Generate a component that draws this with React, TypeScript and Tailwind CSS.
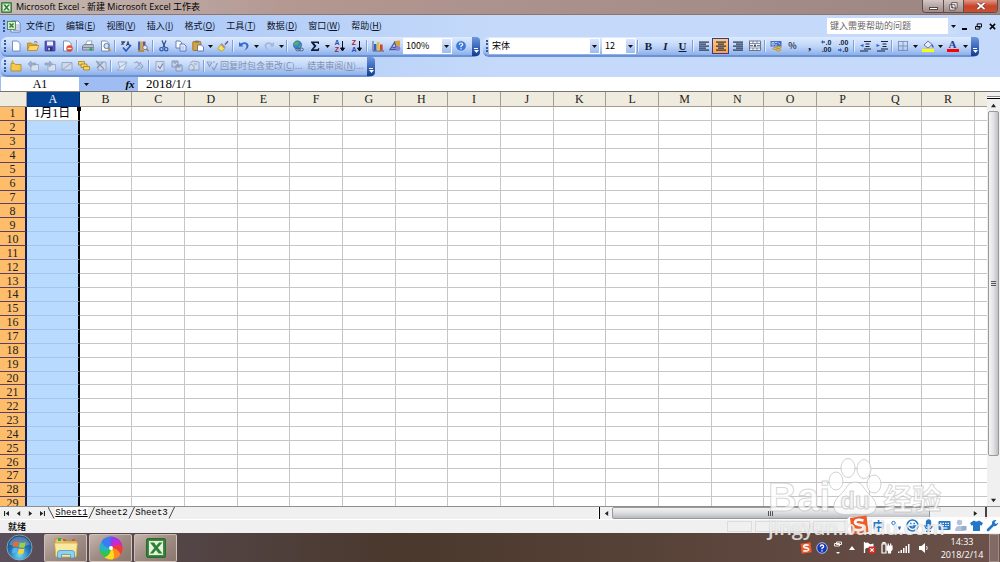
import type { ReactNode } from "react";
import clsx from "clsx";

const columns = "ABCDEFGHIJKLMNOPQR".split("");
const rows = Array.from({ length: 29 }, (_, i) => i + 1);

const menus = [
  ["文件", "F"],
  ["编辑", "E"],
  ["视图", "V"],
  ["插入", "I"],
  ["格式", "O"],
  ["工具", "T"],
  ["数据", "D"],
  ["窗口", "W"],
  ["帮助", "H"],
];

const doc = (
  <path d="M2.5 1h5l2.5 2.500v7.500h-7.500z" fill="#fff" stroke="#5d78ad" strokeWidth="0.8" />
);

const lines = (widths: number[], anchor: "l" | "c" | "r") =>
  widths.map((w, i) => (
    <rect
      key={i}
      x={anchor === "l" ? 1 : anchor === "r" ? 11 - w : 6 - w / 2}
      y={1.5 + i * 2}
      width={w}
      height="1.2"
      fill="#20304f"
    />
  ));

const icons: Record<string, ReactNode> = {
  new: doc,
  open: (
    <>
      <path d="M0.500 3h4l1 1.200h4.500V10H0.500z" fill="#e8a922" stroke="#a8740f" strokeWidth="0.6" />
      <path d="M2.500 5.500H12L9.800 10.500H0.500z" fill="#ffd766" stroke="#a8740f" strokeWidth="0.6" />
      <path d="M7 2.200q2-1.600 3.500 0.500" fill="none" stroke="#7a5a22" strokeWidth="0.9" />
    </>
  ),
  save: (
    <>
      <rect x="1" y="1" width="10" height="10" rx="0.500" fill="#5858c0" stroke="#33338a" strokeWidth="0.7" />
      <rect x="3" y="1.500" width="6" height="4" fill="#eef1fb" />
      <rect x="3.500" y="7" width="5" height="4" fill="#2c2c70" />
      <rect x="4.300" y="7.800" width="1.500" height="2.500" fill="#dfe3f7" />
    </>
  ),
  permission: (
    <>
      {doc}
      <circle cx="8.500" cy="8.500" r="3.200" fill="#e2492a" />
      <rect x="6.500" y="7.800" width="4" height="1.400" fill="#fff" />
    </>
  ),
  print: (
    <>
      <path d="M3.500 5l1.500-4h5L8.800 5z" fill="#fff" stroke="#70829f" strokeWidth="0.6" />
      <path d="M0.500 6l2-1.500h8.500L12 6v4H0.500z" fill="#b7bdca" stroke="#566179" strokeWidth="0.7" />
      <path d="M1 7.500h10.500" stroke="#6d7588" strokeWidth="0.8" />
      <circle cx="9" cy="9.200" r="1.600" fill="#3aa84c" />
    </>
  ),
  preview: (
    <>
      {doc}
      <circle cx="7.500" cy="6" r="2.600" fill="#cfe4fb" stroke="#5c6c88" strokeWidth="0.9" />
      <path d="M9 8l2.500 3" stroke="#c8852b" strokeWidth="1.500" />
    </>
  ),
  spelling: (
    <>
      <path d="M1 2h4M3 1v4M1 4.500q2-0.500 4-3M6.500 6L8 1.500 9.500 6M7 4.500h2" fill="none" stroke="#222e4d" strokeWidth="0.9" />
      <path d="M3 7.500l3 3.500 5-6" fill="none" stroke="#2857b8" strokeWidth="1.600" />
    </>
  ),
  research: (
    <>
      <path d="M1 1.500h2.500V10H1z" fill="#4b65b8" />
      <path d="M3.500 1.500H6V10H3.500z" fill="#dfa735" />
      <path d="M6 1.500h2.500V7H6z" fill="#6d4fa0" />
      <circle cx="8" cy="7.500" r="2.200" fill="#dceafc" stroke="#5f6b85" strokeWidth="0.8" />
      <path d="M9.500 9l2 2.300M1 11h6" stroke="#b87924" strokeWidth="1.300" />
    </>
  ),
  cut: (
    <>
      <path d="M4 0.500l3 7M8 0.500l-3 7" stroke="#2c4d90" strokeWidth="1.200" />
      <circle cx="3.500" cy="9.200" r="1.700" fill="none" stroke="#2c55ad" strokeWidth="1.200" />
      <circle cx="8.200" cy="9.200" r="1.700" fill="none" stroke="#2c55ad" strokeWidth="1.200" />
    </>
  ),
  copy: (
    <>
      <path d="M1 1h4l1.500 1.500V8H1z" fill="#fff" stroke="#4667ae" strokeWidth="0.8" />
      <path d="M5 4h4l2 2v5H5z" fill="#e9f0fd" stroke="#4667ae" strokeWidth="0.8" />
      <path d="M6.300 7h3M6.300 9h3" stroke="#7d97cf" strokeWidth="0.7" />
    </>
  ),
  paste: (
    <>
      <rect x="0.800" y="1.500" width="8" height="9" rx="0.800" fill="#dda136" stroke="#8a5d13" strokeWidth="0.7" />
      <rect x="3" y="0.600" width="3.800" height="2.200" fill="#7c7c86" />
      <path d="M5.500 5h4l2 2v4h-6z" fill="#fff" stroke="#4667ae" strokeWidth="0.800" />
    </>
  ),
  brush: (
    <>
      <path d="M7.500 4l3-3.300 1 1L8.500 5z" fill="#6b4c85" />
      <path d="M4.500 3l4.500 4-1.500 1.500-4-4z" fill="#9d9aa8" />
      <path d="M3.500 4.500l4 4L5 11.200 0.800 9z" fill="#f7df58" stroke="#a98b1f" strokeWidth="0.600" />
    </>
  ),
  undo: (
    <path d="M1 2v4.500h4.500L4 5q4-2.500 4.500 1 0 2-2 4.500Q11 8 10.500 5 9 0.500 2.700 3.500z" fill="#3167cf" />
  ),
  redo: (
    <path d="M11 2v4.500H6.500L8 5Q4 2.500 3.500 6q0 2 2 4.500Q1 8 1.500 5 3 0.500 9.300 3.500z" fill="#a3b8da" />
  ),
  link: (
    <>
      <circle cx="5.500" cy="5" r="4.200" fill="#3a7fd0" stroke="#275b9c" strokeWidth="0.5" />
      <path d="M3 2q3-1 4 0.500L5.500 5 3 5.500 1.800 4zM6 6l3-1-1 3z" fill="#50b558" />
      <ellipse cx="6" cy="9.500" rx="2.300" ry="1.400" fill="none" stroke="#4d5f80" strokeWidth="0.9" />
      <ellipse cx="9.300" cy="9.500" rx="2.300" ry="1.400" fill="none" stroke="#4d5f80" strokeWidth="0.9" />
    </>
  ),
  sum: <path d="M2 1.500h8v2.500H9L8.500 3H5l2.500 3L4.500 9.200h4.200L9.500 8h0.800l-0.500 3H2v-1l3-3.800L2 2.500z" fill="#111d38" />,
  chart: (
    <>
      <path d="M1 1v10h11" fill="none" stroke="#404f70" strokeWidth="0.9" />
      <path d="M2 4h2.400v6.500H2z" fill="#2f5fc4" />
      <path d="M5 2h2.400v8.500H5z" fill="#f1b92c" />
      <path d="M8 4.500h2.600v6H8z" fill="#d04426" />
    </>
  ),
  drawing: (
    <>
      <path d="M5 1l6-0.500V6L8 7.500z" fill="#d8a33a" />
      <path d="M1 9.500L5.500 2.500 8 9.500zM3.300 7.500h3.500" fill="none" stroke="#4a5aa8" strokeWidth="1.300" />
      <circle cx="9" cy="8.500" r="2.400" fill="#8a82cd" />
    </>
  ),
  help: (
    <>
      <circle cx="6" cy="6" r="5.300" fill="#3b78d8" stroke="#c8dcfa" strokeWidth="0.8" />
      <path d="M4.300 4.700Q4.500 3 6 3t1.700 1.500Q7.700 5.500 6 6.200v1" fill="none" stroke="#fff" strokeWidth="1.200" />
      <rect x="5.400" y="8.200" width="1.200" height="1.200" fill="#fff" />
    </>
  ),
  left: lines([10, 7, 10, 7, 10], "l"),
  center: lines([10, 6, 10, 6, 10], "c"),
  right: lines([10, 7, 10, 7, 10], "r"),
  merge: (
    <>
      <rect x="0.500" y="1" width="11" height="9.500" fill="#f4f8ff" stroke="#3f4c69" strokeWidth="0.7" />
      <path d="M0.500 3.500h11M0.500 8h11M4 1v2.500M8 1v2.500M4 8v2.500M8 8v2.500" stroke="#3f4c69" strokeWidth="0.6" />
      <path d="M1 5.800h3M8 5.800h3M5 7l1-2.500L7 7" fill="none" stroke="#1c2c50" strokeWidth="0.9" />
    </>
  ),
  currency: (
    <>
      <rect x="0.500" y="1" width="11" height="5.500" fill="#3f6cc0" />
      <path d="M2 2.500h2v2.500H2zM5 2.500h2.300M5 5h2.300M8.500 2.500l1.500 2" fill="none" stroke="#dbe8fd" strokeWidth="0.800" />
      <ellipse cx="5" cy="8.500" rx="2.300" ry="1" fill="#efc04a" stroke="#9c7014" strokeWidth="0.5" />
      <ellipse cx="8.500" cy="9.800" rx="2.300" ry="1.200" fill="#efc04a" stroke="#9c7014" strokeWidth="0.5" />
      <ellipse cx="9" cy="7.300" rx="2.300" ry="1" fill="#efc04a" stroke="#9c7014" strokeWidth="0.5" />
    </>
  ),
  outdent: (
    <>
      <path d="M5 1.500h7M6.500 4h4M6.500 6.500h4M5 9h7M1 11h8" stroke="#16233f" strokeWidth="1.200" />
      <path d="M4.500 4L1 5.500 4.500 7z" fill="#2d60c4" />
    </>
  ),
  indent: (
    <>
      <path d="M5 1.500h7M6.500 4h4M6.500 6.500h4M5 9h7M1 11h8" stroke="#16233f" strokeWidth="1.200" />
      <path d="M0.500 4L4 5.500 0.500 7z" fill="#2d60c4" />
    </>
  ),
  borders: <path d="M1 1.500h10M1 6h10M1 10.500h10M1.500 1v10M6 1v10M10.500 1v10" stroke="#7486ab" strokeWidth="0.8" />,
  fill: (
    <>
      <path d="M2 5l4-4 4 3.500-4 3.500z" fill="#e7edf8" stroke="#50607f" strokeWidth="0.8" />
      <path d="M9.500 4q2.500 0.500 2 4-1.500-0.500-2-2.500z" fill="#3869c6" />
      <rect x="0" y="9" width="12" height="3" fill="#ffff00" />
    </>
  ),
  folder: (
    <>
      <path d="M1 3.500h3.500l1 1H11V11H1z" fill="#f5c84a" stroke="#a87f19" strokeWidth="0.7" />
      <path d="M2.500 0.500v3M1 2h3" stroke="#e1a719" strokeWidth="0.9" />
    </>
  ),
  prev: (
    <>
      <path d="M4 4.500h7.500V11H4z" fill="#d6dfee" stroke="#93a2c0" strokeWidth="0.8" />
      <path d="M1 4l3-3v2h4.500v2H4v2z" fill="#9fafcb" stroke="#8393b4" strokeWidth="0.6" />
    </>
  ),
  next: (
    <>
      <path d="M4 4.500h7.500V11H4z" fill="#d6dfee" stroke="#93a2c0" strokeWidth="0.8" />
      <path d="M8.500 4l-3-3v2H1v2h4.500v2z" fill="#9fafcb" stroke="#8393b4" strokeWidth="0.6" />
    </>
  ),
  note: <path d="M1 2.500h10v7.500H1zM1.500 9.500L10.500 3" fill="#cfd9ea" stroke="#8d9cbb" strokeWidth="0.8" />,
  notes: (
    <>
      <path d="M0.500 1.500h6V5h-6z" fill="#f8d25a" stroke="#9c781c" strokeWidth="0.7" />
      <path d="M3 4h6v3.500H3z" fill="#f8d25a" stroke="#9c781c" strokeWidth="0.7" />
      <path d="M5.500 6.500h6V10h-6z" fill="#f8d25a" stroke="#9c781c" strokeWidth="0.7" />
    </>
  ),
  del: (
    <>
      <path d="M3 2h8v8H3z" fill="#cfd9ea" stroke="#8d9cbb" strokeWidth="0.8" />
      <path d="M1 1l8 8M8 2L2 8" stroke="#8696b6" strokeWidth="1.100" />
    </>
  ),
  ink: <path d="M2 2h9L8 10H1q4-1 2-5zM3 8l7-5" fill="#dde6f5" stroke="#95a5c4" strokeWidth="0.8" />,
  inkoff: <path d="M1 3q3-2 5 0 4 1 4 4-2 3-6 2M3 1l6 7M8 2L2 9" fill="none" stroke="#95a5c4" strokeWidth="1" />,
  task: (
    <>
      <path d="M2 1.500h8v9.500H2z" fill="#d5deee" stroke="#8d9cbb" strokeWidth="0.8" />
      <path d="M4 6l2 2.500 3-5" fill="none" stroke="#7586a8" strokeWidth="1.200" />
    </>
  ),
  files: <path d="M1 1h6v6H1zM3 1v2h2V1M5 5h6v6H5zM7 5v2h2V5" fill="#c8d3e7" stroke="#7f90b2" strokeWidth="0.9" />,
  mail: <path d="M2 3l3-2 6 1v8H4M1 10V6l2-2 3 2v4zM6 4h3" fill="#cfd9ea" stroke="#8d9cbb" strokeWidth="0.8" />,
  reply: <path d="M1 1.500l2.500 5L6 2M2.500 2h2M6 7l2 3 3.500-7M7 2h2" fill="none" stroke="#8d9cbb" strokeWidth="1.200" />,
};

function Icon({ name }: { name: string }) {
  return (
    <svg viewBox="0 0 12 12" className="size-3" aria-hidden>
      {icons[name]}
    </svg>
  );
}

function Tool({ label, icon, active, children }: { label: string; icon?: string; active?: boolean; children?: ReactNode }) {
  return (
    <button
      type="button"
      aria-label={label}
      className={clsx(
        "flex h-4 w-[17px] shrink-0 items-center justify-center text-[#111d38]",
        active && "border border-[#3a3a8c] bg-linear-to-b from-[#ffc97c] to-[#ff9f45]",
      )}
    >
      {icon ? <Icon name={icon} /> : children}
    </button>
  );
}

function Caret() {
  return (
    <svg viewBox="0 0 5 3" className="h-[3px] w-[5px]" aria-hidden>
      <path d="M0 0h5L2.500 3z" fill="#111" />
    </svg>
  );
}

function More({ label }: { label: string }) {
  return (
    <button type="button" aria-label={`${label}选项`} className="flex h-4 w-2 shrink-0 items-center justify-center">
      <Caret />
    </button>
  );
}

function Sep() {
  return <span className="mx-px h-3 w-0.5 shrink-0 border-l border-[#7d9fdb] bg-white/60" />;
}

function Grip() {
  return <span className="mr-px ml-[3px] h-3 w-px shrink-0 border-l-2 border-dotted border-[#35599f]" />;
}

function Bar({ label, children }: { label: string; children: ReactNode }) {
  return (
    <div
      role="toolbar"
      aria-label={label}
      className="flex h-5 shrink-0 items-center rounded-md border-b-2 border-[#6b91d3] bg-linear-to-b from-[#deebff] via-[#c0d6f8] to-[#8db0ea]"
    >
      {children}
      <button
        type="button"
        aria-label={`${label}选项`}
        className="ml-auto flex h-[19px] w-2 shrink-0 flex-col items-center justify-end gap-px rounded-r-sm bg-linear-to-b from-[#6c97e0] to-[#123c92] pb-[3px]"
      >
        <span className="h-px w-1 bg-white" />
        <svg viewBox="0 0 5 3" className="h-[3px] w-[5px]" aria-hidden>
          <path d="M0 0h5L2.500 3z" fill="#fff" />
        </svg>
      </button>
    </div>
  );
}

function Combo({ label, value, className }: { label: string; value: string; className: string }) {
  return (
    <div className={clsx("flex h-4 shrink-0 bg-white p-px", className)}>
      <select
        aria-label={label}
        className="min-w-0 flex-1 appearance-none px-0.5 text-[9px] leading-[14px] text-black outline-none"
      >
        <option>{value}</option>
      </select>
      <span className="flex w-[9px] items-center justify-center bg-linear-to-b from-[#dbe8fd] to-[#9dbbee]">
        <Caret />
      </span>
    </div>
  );
}

function SortIcon({ top, bottom }: { top: string; bottom: string }) {
  return (
    <span className="flex items-center">
      <span className="flex flex-col font-['Liberation_Sans',sans-serif] text-[7px] leading-[7px] font-bold">
        <span className={top === "A" ? "text-[#2850ad]" : "text-[#a5222b]"}>{top}</span>
        <span className={bottom === "A" ? "text-[#2850ad]" : "text-[#a5222b]"}>{bottom}</span>
      </span>
      <svg viewBox="0 0 5 12" className="h-3 w-[5px]" aria-hidden>
        <path d="M2.500 1v9M0.500 8l2 3 2-3z" fill="#111" stroke="#111" />
      </svg>
    </span>
  );
}

function DecimalIcon({ top, bottom, less }: { top: string; bottom: string; less?: boolean }) {
  return (
    <span className="relative flex flex-col items-end font-['Liberation_Sans',sans-serif] text-[7px] leading-[7px] font-bold">
      <span>{top}</span>
      <span>{bottom}</span>
      <svg viewBox="0 0 4 4" className={clsx("absolute -left-px size-1", less ? "bottom-px rotate-180" : "top-px")} aria-hidden>
        <path d="M0 2l2-2v1.300h2v1.400H2V4z" fill="#2d60c4" />
      </svg>
    </span>
  );
}

function ExcelLogo({ className }: { className: string }) {
  return (
    <svg viewBox="0 0 20 20" className={className} aria-hidden>
      <rect x="0.700" y="0.700" width="18.600" height="18.600" rx="1.500" fill="#3f8b40" stroke="#2b6b2f" strokeWidth="1.400" />
      <rect x="3" y="3" width="14" height="14" fill="#e6f2df" />
      <path d="M4 4.500h4l2.300 3.300L13 4.500h3.500l-4.600 5.300 4.600 5.700h-4l-2.500-3.600-2.800 3.600H3.800l4.500-5.600z" fill="#2f8034" />
    </svg>
  );
}

function TitleBar() {
  return (
    <header className="flex h-[15px] shrink-0 items-center border-b border-[#8c7672] bg-linear-to-r from-[#c6bab4] via-[#b39791] via-30% to-[#9b8682] pl-px">
      <ExcelLogo className="size-[11px]" />
      <h1 className="ml-1 font-['Open_Sans','Noto_Sans_CJK_SC',sans-serif] text-[9px] leading-[14px] text-black">
        Microsoft Excel - 新建 Microsoft Excel 工作表
      </h1>
      <div className="mr-0.5 ml-auto flex h-[13px] self-start overflow-hidden rounded-b border border-t-0 border-[#5e4d4b]">
        <button type="button" aria-label="最小化" className="flex w-[21px] items-center justify-center border-r border-[#5e4d4b] bg-linear-to-b from-[#d3c6c4] to-[#a08b88]">
          <span className="mt-1 h-[3px] w-[9px] border border-[#57494a] bg-white" />
        </button>
        <button type="button" aria-label="还原" className="flex w-[20px] items-center justify-center border-r border-[#5e4d4b] bg-linear-to-b from-[#d3c6c4] to-[#a08b88]">
          <svg viewBox="0 0 10 10" className="size-[9px]" aria-hidden>
            <path d="M3 0.700h6v6H3zM0.800 3h6v6h-6z" fill="#fff" stroke="#57494a" strokeWidth="1" />
            <path d="M3 5h1.800v1.800H3z" fill="#57494a" />
          </svg>
        </button>
        <button type="button" aria-label="关闭" className="flex w-[33px] items-center justify-center bg-linear-to-b from-[#dd9a89] via-[#cb432a] to-[#c55135]">
          <svg viewBox="0 0 10 8" className="h-2 w-[10px]" aria-hidden>
            <path d="M1.500 1l7 6M8.500 1l-7 6" stroke="#6a3028" strokeWidth="3" />
            <path d="M1.500 1l7 6M8.500 1l-7 6" stroke="#fff" strokeWidth="1.700" />
          </svg>
        </button>
      </div>
    </header>
  );
}

function MenuBar() {
  return (
    <nav className="flex h-[22px] shrink-0 items-center pr-1 text-[9px]">
      <Grip />
      <svg viewBox="0 0 14 13" className="ml-px h-[13px] w-[14px]" aria-hidden>
        <path d="M4 1h7l2 2v9H4z" fill="#fff" stroke="#5370a8" strokeWidth="0.8" />
        <path d="M9 5h3M9 7h3M9 9h3M6 10.500h6" stroke="#7d97cf" strokeWidth="0.8" />
        <rect x="0.500" y="1.500" width="8" height="8" fill="#d9edd2" stroke="#3a7b3c" strokeWidth="0.8" />
        <path d="M2.500 3.500l4 4M6.500 3.500l-4 4" stroke="#2f8034" strokeWidth="1.500" />
      </svg>
      <div className="ml-[5px] flex gap-[11px]">
        {menus.map(([name, key]) => (
          <button key={key} type="button" className="whitespace-nowrap text-[#0a1226]">
            {name}(<u>{key}</u>)
          </button>
        ))}
      </div>
      <div className="ml-auto flex h-4 w-[131px] bg-white">
        <input
          aria-label="键入需要帮助的问题"
          placeholder="键入需要帮助的问题"
          className="min-w-0 flex-1 pl-[3px] text-[9px] outline-none placeholder:text-[#666]"
        />
        <button type="button" aria-label="显示问题列表" className="flex w-[10px] items-center justify-center bg-[#c9dcfa]">
          <Caret />
        </button>
      </div>
      <div className="ml-1 flex w-[34px] items-center justify-between">
        <button type="button" aria-label="最小化工作簿" className="flex h-2 w-[5px] items-end">
          <span className="h-0.5 w-full bg-black" />
        </button>
        <button type="button" aria-label="还原工作簿">
          <svg viewBox="0 0 8 8" className="size-[7px]" aria-hidden>
            <path d="M2.500 1h5v3.500h-5zM0.500 4h5v3h-5z" fill="#c4d9f9" stroke="#000" strokeWidth="1.100" />
          </svg>
        </button>
        <button type="button" aria-label="关闭工作簿">
          <svg viewBox="0 0 8 8" className="size-[7px]" aria-hidden>
            <path d="M1 1l6 6M7 1L1 7" stroke="#000" strokeWidth="1.700" />
          </svg>
        </button>
      </div>
    </nav>
  );
}

function Toolbars() {
  return (
    <div className="flex shrink-0 flex-col pl-px">
      <div className="flex gap-[3px]">
        <Bar label="常用">
          <Grip />
          <Tool label="新建" icon="new" />
          <Tool label="打开" icon="open" />
          <Tool label="保存" icon="save" />
          <Tool label="权限" icon="permission" />
          <Sep />
          <Tool label="打印" icon="print" />
          <Tool label="打印预览" icon="preview" />
          <Sep />
          <Tool label="拼写检查" icon="spelling" />
          <Tool label="信息检索" icon="research" />
          <Sep />
          <Tool label="剪切" icon="cut" />
          <Tool label="复制" icon="copy" />
          <Tool label="粘贴" icon="paste" />
          <More label="粘贴" />
          <Tool label="格式刷" icon="brush" />
          <Sep />
          <Tool label="撤消" icon="undo" />
          <More label="撤消" />
          <Tool label="恢复" icon="redo" />
          <More label="恢复" />
          <Sep />
          <Tool label="超链接" icon="link" />
          <Tool label="自动求和" icon="sum" />
          <More label="自动求和" />
          <Tool label="升序排序">
            <SortIcon top="A" bottom="Z" />
          </Tool>
          <Tool label="降序排序">
            <SortIcon top="Z" bottom="A" />
          </Tool>
          <Sep />
          <Tool label="图表向导" icon="chart" />
          <Tool label="绘图" icon="drawing" />
          <Combo label="显示比例" value="100%" className="w-[49px]" />
          <Tool label="帮助" icon="help" />
          <span className="w-[3px]" />
        </Bar>
        <Bar label="格式">
          <Grip />
          <Combo label="字体" value="宋体" className="mr-0.5 w-[111px]" />
          <Combo label="字号" value="12" className="w-[34px]" />
          <Sep />
          <Tool label="加粗">
            <b className="font-['Liberation_Serif',serif] text-[11px]">B</b>
          </Tool>
          <Tool label="倾斜">
            <b className="font-['Liberation_Serif',serif] text-[11px] italic">I</b>
          </Tool>
          <Tool label="下划线">
            <b className="font-['Liberation_Serif',serif] text-[11px] underline">U</b>
          </Tool>
          <Sep />
          <Tool label="左对齐" icon="left" />
          <Tool label="居中" icon="center" active />
          <Tool label="右对齐" icon="right" />
          <Tool label="合并及居中" icon="merge" />
          <Sep />
          <Tool label="货币样式" icon="currency" />
          <Tool label="百分比样式">
            <span className="text-[9px] font-medium">%</span>
          </Tool>
          <Tool label="千位分隔样式">
            <span className="font-['Liberation_Serif',serif] text-[13px] leading-[12px] font-bold">,</span>
          </Tool>
          <Tool label="增加小数位数">
            <DecimalIcon top=".0" bottom=".00" />
          </Tool>
          <Tool label="减少小数位数">
            <DecimalIcon top=".00" bottom=".0" less />
          </Tool>
          <Sep />
          <Tool label="减少缩进量" icon="outdent" />
          <Tool label="增加缩进量" icon="indent" />
          <Sep />
          <Tool label="边框" icon="borders" />
          <More label="边框" />
          <Tool label="填充颜色" icon="fill" />
          <More label="填充颜色" />
          <Tool label="字体颜色">
            <span className="flex h-3 w-3 items-center justify-center border-b-[3px] border-[#f00] font-['Liberation_Serif',serif] text-[11px] leading-[9px] font-bold text-[#1e3f8c]">
              A
            </span>
          </Tool>
          <More label="字体颜色" />
          <span className="w-0.5" />
        </Bar>
      </div>
      <div className="flex">
        <Bar label="审阅">
          <Grip />
          <Tool label="新批注" icon="folder" />
          <Tool label="前一批注" icon="prev" />
          <Tool label="后一批注" icon="next" />
          <Tool label="显示批注" icon="note" />
          <Tool label="显示所有批注" icon="notes" />
          <Tool label="删除批注" icon="del" />
          <Sep />
          <Tool label="显示墨迹" icon="ink" />
          <Tool label="删除墨迹" icon="inkoff" />
          <Sep />
          <Tool label="创建任务" icon="task" />
          <Tool label="更新文件" icon="files" />
          <Tool label="发送邮件" icon="mail" />
          <Sep />
          <button type="button" disabled className="flex items-center gap-0.5 text-[9px] whitespace-nowrap text-[#8290ab]">
            <Icon name="reply" />
            <span>
              回复时包含更改(<u>C</u>)...
            </span>
          </button>
          <button type="button" disabled className="mr-1 ml-[5px] text-[9px] whitespace-nowrap text-[#8290ab]">
            结束审阅(<u>N</u>)...
          </button>
        </Bar>
      </div>
    </div>
  );
}

function FormulaBar() {
  return (
    <div className="flex h-[14px] shrink-0 bg-[#9fbdf3] font-['Liberation_Serif','Noto_Sans_CJK_SC',serif]">
      <input aria-label="名称框" defaultValue="A1" className="ml-px w-[78px] bg-white text-center text-[12px] leading-[14px] outline-none" />
      <button type="button" aria-label="名称列表" className="flex w-[14px] items-center justify-center">
        <Caret />
      </button>
      <button type="button" aria-label="插入函数" className="ml-auto w-[14px] text-[11px] leading-[14px] font-bold italic">
        fx
      </button>
      <input
        aria-label="编辑栏"
        defaultValue="2018/1/1"
        className="ml-px w-[calc(100%-138px)] bg-white pl-2 text-[13px] leading-[14px] outline-none"
      />
    </div>
  );
}

function Sheet() {
  return (
    <div className="min-w-0 flex-1 overflow-hidden">
      <table className="h-[419px] w-full table-fixed border-separate border-spacing-0 text-center font-['Liberation_Serif','Noto_Sans_CJK_SC',serif] text-[12px] leading-[12px]">
        <colgroup>
          <col className="w-[27px]" />
          {columns.map((c) => (
            <col key={c} />
          ))}
          <col className="w-[12px]" />
        </colgroup>
        <thead>
          <tr className="h-[15px] bg-[#efebde]">
            <th className="border-r border-b border-[#a09d8d]" />
            {columns.map((c) => (
              <th
                key={c}
                scope="col"
                className={clsx(
                  "border-r border-b p-0 font-normal",
                  c === "A" ? "border-[#00307a] bg-[#044394] text-white" : "border-[#a09d8d] text-[#222]",
                )}
              >
                {c}
              </th>
            ))}
            <th className="border-b border-[#a09d8d]" />
          </tr>
        </thead>
        <tbody>
          {rows.map((r) => (
            <tr key={r}>
              <th scope="row" className="border-r-2 border-b border-r-[#1d1d4c] border-b-[#59406a] bg-[#fdbd6b] p-0 font-normal text-[#222]">
                {r}
              </th>
              {columns.map((c) => (
                <td
                  key={c}
                  className={clsx(
                    "border-b p-0 whitespace-nowrap",
                    c !== "A" && "border-r border-[#c6c6c6]",
                    c === "A" && "relative border-r-2 border-r-black",
                    c === "A" && (r === 1 ? "border-b-[#c6c6c6]" : "border-b-[#a3c6ea] bg-[#b8daff]"),
                  )}
                >
                  {c === "A" && r === 1 && (
                    <>
                      1月1日
                      <span className="absolute top-0 -right-[3px] size-1 bg-black" />
                    </>
                  )}
                </td>
              ))}
              <td className="border-b border-[#c6c6c6] p-0" />
            </tr>
          ))}
        </tbody>
      </table>
    </div>
  );
}

function ScrollArrow({ label, d }: { label: string; d: string }) {
  return (
    <button type="button" aria-label={label} className="flex size-3 shrink-0 items-center justify-center">
      <svg viewBox="0 0 6 6" className="size-[5px]" aria-hidden>
        <path d={d} fill="#222" />
      </svg>
    </button>
  );
}

function VerticalScroll() {
  return (
    <div className="flex w-[13px] shrink-0 flex-col items-center bg-[#f0f0f0]">
      <span className="mt-1 h-[3px] w-full border-t border-b border-t-[#888] border-b-black bg-white" />
      <ScrollArrow label="向上滚动" d="M0 5l3-4 3 4z" />
      <div className="flex w-full flex-1 flex-col items-center">
        <div className="flex h-[90%] w-[11px] flex-col items-center justify-center gap-px rounded-xs border border-[#999] bg-linear-to-r from-[#f5f5f5] via-[#e2e2e4] to-[#bfc0c4]">
          <span className="h-px w-[5px] bg-[#555]" />
          <span className="h-px w-[5px] bg-[#555]" />
          <span className="h-px w-[5px] bg-[#555]" />
        </div>
      </div>
      <ScrollArrow label="向下滚动" d="M0 1l3 4 3-4z" />
    </div>
  );
}

function SheetTabs() {
  return (
    <div className="flex h-[13px] shrink-0 items-center border-t border-[#8f8f8f] bg-[#f0f0f0]">
      <ScrollArrow label="第一张" d="M0 0h1.300v6H0zM6 0v6L2 3z" />
      <ScrollArrow label="上一张" d="M5 0v6L1 3z" />
      <ScrollArrow label="下一张" d="M1 0v6l4-3z" />
      <ScrollArrow label="最后一张" d="M0 0v6l4-3zM4.700 0H6v6H4.700z" />
      <div role="tablist" className="flex h-full items-center font-['Liberation_Mono',monospace] text-[9px] leading-[12px]">
        <svg viewBox="0 0 7 12" className="h-3 w-[7px]" aria-hidden>
          <path d="M0 0l6 11.500" stroke="#333" strokeWidth="0.9" />
        </svg>
        {["Sheet1", "Sheet2", "Sheet3"].map((name, i) => (
          <div key={name} className="flex">
            <button type="button" role="tab" aria-selected={i === 0} className={clsx("w-[33px]", i === 0 && "bg-white underline")}>
              {name}
            </button>
            <svg viewBox="0 0 7 12" className="h-3 w-[7px]" aria-hidden>
              <path d="M6.500 0L1 11.500" stroke="#333" strokeWidth="0.9" />
            </svg>
          </div>
        ))}
      </div>
      <div className="ml-auto flex h-full w-[40.2%] items-center">
        <span className="h-full w-0.5 border-r border-black bg-white" />
        <ScrollArrow label="向左滚动" d="M5 0v6L1 3z" />
        <div className="flex h-full flex-1">
          <div className="flex h-full w-[89%] items-center justify-center gap-px rounded-xs border border-[#999] bg-linear-to-b from-[#f3f3f3] via-[#dcdde0] to-[#b9babe]">
            <span className="h-[5px] w-px bg-[#555]" />
            <span className="h-[5px] w-px bg-[#555]" />
            <span className="h-[5px] w-px bg-[#555]" />
          </div>
        </div>
        <ScrollArrow label="向右滚动" d="M1 0v6l4-3z" />
        <span className="ml-1 h-full w-0.5 bg-[#444]" />
        <span className="w-[13px]" />
      </div>
    </div>
  );
}

function StatusBar() {
  return (
    <footer className="flex h-[14px] shrink-0 items-center border-t border-white bg-[#f0f0f0] pl-2 text-[9px] leading-3 font-medium text-black">
      就绪
      <div className="ml-auto flex w-[27.5%] gap-[3px]">
        <span className="h-[11px] w-[25px] border border-[#dcdcdc]" />
        <span className="h-[11px] w-[55px] border border-[#dcdcdc]" />
        <span className="h-[11px] w-[38px] border border-[#dcdcdc]" />
      </div>
    </footer>
  );
}

function Sogou({ className }: { className: string }) {
  return (
    <svg viewBox="0 0 20 20" className={className} aria-hidden>
      <path d="M1 3l16.500-2.500L19.500 17 3 19.500z" fill="#f05a28" />
      <path d="M14.500 5.500Q7 3.500 6 7q0 2.200 4.200 2.800 4.800 0.700 4.300 3.200-1.500 3.300-9 1.500" fill="none" stroke="#fff" strokeWidth="2.600" />
    </svg>
  );
}

function InputMethodBar() {
  return (
    <div className="absolute right-0 bottom-7 flex h-[17px] items-center gap-[3px] rounded-l bg-white/90 pr-px pl-0.5 text-[#2277c8]">
      <Sogou className="-mt-0.5 size-5" />
      <span className="w-[13px] text-center text-[12px] leading-4 font-bold">中</span>
      <svg viewBox="0 0 13 13" className="ml-0.5 size-[13px]" aria-hidden>
        <circle cx="3.500" cy="4" r="1.700" fill="none" stroke="currentColor" />
        <path d="M8 7.500h3q0 3-2.500 4 1-1.500 0-2z" fill="currentColor" />
      </svg>
      <svg viewBox="0 0 13 13" className="size-[13px]" fill="none" stroke="currentColor" strokeWidth="1.500" aria-hidden>
        <circle cx="6.500" cy="6.500" r="5.500" />
        <path d="M3.500 7q3 4 6 0zM4 4.500h1.500M7.500 4.500H9" />
      </svg>
      <svg viewBox="0 0 13 13" className="size-[13px]" fill="none" stroke="currentColor" strokeWidth="1.300" aria-hidden>
        <rect x="4.500" y="1" width="4" height="7" rx="2" fill="currentColor" />
        <path d="M2.800 6q0.200 4 3.700 4t3.700-4M6.500 10v2.500M4 12.300h5" />
      </svg>
      <svg viewBox="0 0 13 13" className="size-[13px]" aria-hidden>
        <rect x="0.500" y="2" width="12" height="9" rx="1" fill="currentColor" />
        <path d="M2 4.300h9M2 6.500h9" stroke="#fff" strokeWidth="1.200" strokeDasharray="1.500 1" />
        <path d="M3.500 9h6" stroke="#fff" strokeWidth="1.200" />
      </svg>
      <svg viewBox="0 0 13 13" className="size-[13px] text-[#b3c2dc]" fill="currentColor" aria-hidden>
        <circle cx="5.500" cy="3.500" r="2.700" />
        <path d="M1 12q0-5 4.500-5T10 12z" />
        <rect x="7.500" y="7" width="5" height="4.500" fill="#98abcd" />
      </svg>
      <svg viewBox="0 0 13 13" className="size-[13px]" fill="currentColor" aria-hidden>
        <path d="M4 1.500q2.500 2 5 0L13 4l-1.500 2.700L10 6v6H3V6l-1.500 0.700L0 4z" />
      </svg>
      <svg viewBox="0 0 13 13" className="size-[13px]" aria-hidden>
        <path d="M2 11l5-5" stroke="currentColor" strokeWidth="2.600" strokeLinecap="round" />
        <path d="M10.500 1Q7 0.500 6 3q-0.500 3 1.500 4 3.500 0.800 5-3.500L10 5 8.500 3.500z" fill="currentColor" />
      </svg>
    </div>
  );
}

function TaskButton({ label, children }: { label: string; children: ReactNode }) {
  return (
    <button
      type="button"
      aria-label={label}
      className="flex h-[28px] w-[43px] items-center justify-center rounded-xs border border-[#d9cdc3]/80 bg-linear-to-br from-[#d8c8bd]/85 via-[#b7a396]/75 to-[#9b877b]/75"
    >
      {children}
    </button>
  );
}

const petals = ["#8b3ff0", "#c42bd0", "#f23a3a", "#ff8a1f", "#ffd81f", "#2fc356", "#25b3c9", "#3a7bf2"];

function Taskbar() {
  return (
    <div className="flex h-[29px] shrink-0 items-center bg-linear-to-r from-[#5b4f5c] via-[#4a382c] via-40% to-[#6b514a] pr-px">
      <button type="button" aria-label="开始" className="ml-1.5 mr-[11px]">
        <svg viewBox="0 0 28 28" className="size-[27px]" aria-hidden>
          <defs>
            <radialGradient id="orb" cx="0.500" cy="0.800" r="0.800">
              <stop offset="0" stopColor="#6fdcf5" />
              <stop offset="0.500" stopColor="#2476b5" />
              <stop offset="1" stopColor="#173e6e" />
            </radialGradient>
          </defs>
          <circle cx="14" cy="14" r="13" fill="url(#orb)" stroke="#9bb8cc" strokeWidth="0.8" />
          <path d="M3 11Q6 2.500 14 2.500T25 11Q14 15 3 11z" fill="#fff" opacity="0.25" />
          <path d="M8 8.500q2.500-1.500 5-0.200L12.200 13.500q-2.500-1-5 0.300z" fill="#ee6a2c" />
          <path d="M14.300 8.700q3 1.200 6-0.200L19.300 13.700q-3 1.300-5.800 0z" fill="#9bd044" />
          <path d="M7 15q2.500-1.300 5-0.200L11 20q-2.500-1.200-5 0.100z" fill="#52b5ee" />
          <path d="M13.200 15q3 1.300 6 0L18 20.300q-3 1.300-5.800 0z" fill="#fcd135" />
        </svg>
      </button>
      <div className="flex gap-0.5">
        <TaskButton label="资源管理器">
          <svg viewBox="0 0 26 24" className="h-[24px] w-[26px]" aria-hidden>
            <path d="M2 3h8l1.500 2H24v15H2z" fill="#e8c765" stroke="#b18d35" strokeWidth="0.7" />
            <path d="M5 2h3v3H5z" fill="#3aa84c" />
            <path d="M10 3h3v2h-3zM19 3h3v2h-3z" fill="#d9534a" />
            <path d="M1.500 7h23L23 21H3z" fill="#f9e8a0" stroke="#c7a44c" strokeWidth="0.7" />
            <path d="M4.500 22v-5q0-2.500 2.500-2.500h12q2.500 0 2.500 2.500v5h-4v-3.500h-9V22z" fill="#8fd0ee" stroke="#4a97c2" strokeWidth="0.8" />
          </svg>
        </TaskButton>
        <TaskButton label="浏览器">
          <svg viewBox="-12 -12 24 24" className="size-6" aria-hidden>
            {petals.map((color, i) => (
              <path key={color} d="M0 0Q-5-5-2-11.300 4-12.500 8-7.800 4-6 0 0z" fill={color} transform={`rotate(${i * 45})`} />
            ))}
            <circle r="2" fill="#fff" />
          </svg>
        </TaskButton>
        <TaskButton label="Microsoft Excel">
          <ExcelLogo className="size-5" />
        </TaskButton>
      </div>
      <div className="ml-auto flex items-center gap-0.5 text-white">
        <Sogou className="size-3" />
        <svg viewBox="0 0 12 12" className="ml-0.5 size-3" aria-hidden>
          <circle cx="6" cy="6" r="5.300" fill="#1638b8" stroke="#b9c6ee" strokeWidth="0.9" />
          <path d="M4.300 4.700Q4.500 3 6 3t1.700 1.500Q7.700 5.500 6 6.200v1M6 8.300v1.200" fill="none" stroke="#fff" strokeWidth="1.300" />
        </svg>
        <svg viewBox="0 0 8 14" className="ml-1 h-[14px] w-2" aria-hidden>
          <path d="M2.500 1h5v2.500h-5zM0.500 2.500h5V5h-5z" fill="#5c463f" stroke="#fff" strokeWidth="0.9" />
          <path d="M2 11h4l-2 2z" fill="#fff" />
        </svg>
        <svg viewBox="0 0 6 4" className="ml-[5px] h-1 w-1.5" aria-hidden>
          <path d="M0 4l3-4 3 4z" fill="#fff" />
        </svg>
        <svg viewBox="0 0 13 13" className="ml-1.5 size-[13px]" aria-hidden>
          <path d="M1.500 1v11" stroke="#fff" strokeWidth="1.300" />
          <path d="M2 2q3-1 4 0.500t4.500 0V8Q8 9 6.500 7.500T2 8z" fill="#fff" />
          <rect x="5.500" y="5.500" width="7" height="7" rx="1" fill="#d92b25" />
          <path d="M7.300 7.300l3.400 3.400M10.700 7.300l-3.400 3.400" stroke="#fff" strokeWidth="1.200" />
        </svg>
        <svg viewBox="0 0 13 13" className="ml-0.5 size-[13px]" fill="none" stroke="#fff" strokeWidth="1.200" aria-hidden>
          <path d="M2 3h4v9H2zM3 3V1.500h2V3" />
          <path d="M7 5h5v3.500L10.500 10v2H8.500v-2L7 8.500zM8.300 5V2.500M10.700 5V2.500" fill="#fff" />
        </svg>
        <svg viewBox="0 0 12 12" className="ml-[3px] size-3" fill="#fff" aria-hidden>
          <path d="M0 9.500h1.500V11H0zM2.500 8H4v3H2.500zM5 6h1.500v5H5zM7.500 4H9v7H7.500zM10 2h1.500v9H10z" />
        </svg>
        <svg viewBox="0 0 12 12" className="ml-1.5 size-3" aria-hidden>
          <path d="M1 4h2.500L7 1v10L3.500 8H1z" fill="#fff" />
          <path d="M8.500 4q1.500 2 0 4" fill="none" stroke="#fff" strokeWidth="0.9" />
        </svg>
        <time className="ml-[5px] flex w-[50px] flex-col text-center font-['Open_Sans',sans-serif] text-[9px] leading-[13px]">
          <span>14:33</span>
          <span>2018/2/14</span>
        </time>
        <button type="button" aria-label="显示桌面" className="h-[28px] w-[10px] border border-[#a08c86] bg-white/15" />
      </div>
    </div>
  );
}

function Watermark() {
  return (
    <div className="pointer-events-none absolute right-12 bottom-[21px] w-[184px] text-white/75">
      <div className="flex items-end font-bold [-webkit-text-stroke:1px_rgba(180,180,180,0.55)]">
        <span className="font-['Liberation_Sans',sans-serif] text-[40px] leading-[36px]">Bai</span>
        <svg viewBox="0 0 54 58" className="-ml-0.5 h-[58px] w-[54px]" fill="currentColor" stroke="#b4b4b4" strokeOpacity="0.6" aria-hidden>
          <ellipse cx="8" cy="24" rx="7" ry="9" />
          <ellipse cx="20" cy="11" rx="7" ry="9.500" />
          <ellipse cx="36" cy="12" rx="7" ry="9.500" />
          <ellipse cx="46" cy="27" rx="7" ry="9" />
          <path d="M27 25q6 0 9 6 3 5 9 10 6 8 1 14-5 4-19 2-14 2-19-2-5-6 1-14 6-5 9-10 3-6 9-6z" />
          <text x="27" y="52" textAnchor="middle" fontFamily="Liberation Sans" fontSize="24" fill="#f4f4f4">
            du
          </text>
        </svg>
        <span className="ml-px text-[29px] leading-[36px]">经验</span>
      </div>
      <div className="font-['Open_Sans',sans-serif] text-[20px] leading-[26px] font-semibold [text-shadow:0_0_1px_rgba(120,120,120,0.5)]">
        jingyan.baidu.com
      </div>
    </div>
  );
}

export default function App() {
  return (
    <div className="relative flex h-screen flex-col overflow-hidden bg-linear-to-r from-[#a3c1f6] to-[#c5dafa] to-50% font-['Noto_Sans_CJK_SC',sans-serif]">
      <TitleBar />
      <MenuBar />
      <Toolbars />
      <FormulaBar />
      <main className="flex min-h-0 flex-1 border-t border-[#77756b] bg-white">
        <Sheet />
        <VerticalScroll />
      </main>
      <SheetTabs />
      <StatusBar />
      <Taskbar />
      <InputMethodBar />
      <Watermark />
    </div>
  );
}
